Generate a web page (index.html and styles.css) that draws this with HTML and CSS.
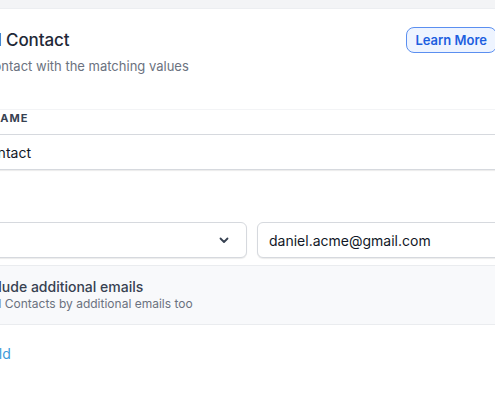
FILE: index.html
```html
<!DOCTYPE html>
<html lang="en">
<head>
<meta charset="utf-8">
<title>Find Contact</title>
<link rel="stylesheet" href="styles.css">
</head>
<body>
<div class="panel">
  <div class="header">
    <div class="heading">
      <h1 class="title">Find Contact</h1>
      <p class="subtitle">Find a Contact with the matching values</p>
    </div>
    <button class="learn-btn" type="button">Learn More</button>
  </div>

  <div class="table-head">
    <span class="col-label">NAME</span>
  </div>
  <div class="input name-input">Contact</div>

  <div class="match-row">
    <div class="select">
      <span class="select-value"></span>
      <svg class="chevron" width="12" height="12" viewBox="0 0 12 12" aria-hidden="true">
        <path d="M2.5 4.5 L6 8 L9.5 4.5" fill="none" stroke="#374151" stroke-width="1.8" stroke-linecap="round" stroke-linejoin="round"/>
      </svg>
    </div>
    <div class="input email">daniel.acme@gmail.com</div>
  </div>

  <div class="option-box">
    <div class="option-title">Include additional emails</div>
    <div class="option-desc">Find Contacts by additional emails too</div>
  </div>

  <a class="add-link" href="#">+ Add Field</a>
</div>
</body>
</html>
```

FILE: styles.css
```css
* { box-sizing: border-box; }

html, body {
  margin: 0;
  padding: 0;
}

body {
  background: #f3f4f6;
  font-family: Inter, "Noto Sans", "Liberation Sans", sans-serif;
  overflow: hidden;
  height: 400px;
  padding-top: 8px;
}

.panel {
  background: #ffffff;
  border-top: 1px solid #eceef1;
  margin-left: -57px;
  width: 590px;
  height: 392px;
  padding: 18px 24px 0 24px;
}

.header {
  display: flex;
  justify-content: space-between;
  align-items: flex-start;
}

.title {
  margin: 0;
  font-size: 17px;
  line-height: 26px;
  font-weight: 500;
  color: #1f2937;
  letter-spacing: -0.1px;
}

.subtitle {
  margin: 4px 0 0 -24px;
  font-size: 13px;
  line-height: 18px;
  color: #6b7280;
}

.learn-btn {
  height: 26px;
  padding: 0 9px 0 8px;
  margin-right: 12px;
  border: 1px solid #5b8ff0;
  background: #eef4ff;
  color: #1d5fe0;
  font-family: inherit;
  font-size: 13px;
  font-weight: 600;
  border-radius: 8px;
  white-space: nowrap;
}

.table-head {
  margin-top: 34px;
  border-top: 1px solid #f3f4f6;
  height: 25px;
  padding: 1px 0 0 24px;
}

.col-label {
  display: block;
  font-size: 11px;
  line-height: 14px;
  font-weight: 700;
  letter-spacing: 0.09em;
  color: #374151;
}

.input {
  height: 36px;
  border: 1px solid #d6d9de;
  border-radius: 6px;
  box-shadow: 0 1px 1px rgba(0, 0, 0, 0.08);
  padding: 0 11px 0 14px;
  display: flex;
  align-items: center;
  font-size: 14px;
  color: #111827;
  background: #fff;
  white-space: nowrap;
}

.name-input {
  padding-left: 11px;
}

.match-row {
  margin-top: 52px;
  display: grid;
  grid-template-columns: 280px 1fr;
  gap: 10px;
}

.select {
  height: 36px;
  border: 1px solid #d6d9de;
  border-radius: 6px;
  box-shadow: 0 1px 1px rgba(0, 0, 0, 0.08);
  display: flex;
  align-items: center;
  justify-content: space-between;
  padding: 0 16px 0 12px;
  background: #fff;
}

.chevron {
  display: block;
}

.input.email {
  padding-left: 11px;
}

.option-box {
  margin-top: 7px;
  height: 60px;
  background: #f8f9fb;
  border: 1px solid #eaecef;
  padding: 0 12px 0 10px;
  display: flex;
  flex-direction: column;
  justify-content: center;
}

.option-title {
  font-size: 14px;
  line-height: 18px;
  font-weight: 500;
  color: #374151;
  white-space: nowrap;
}

.option-desc {
  margin-left: -1px;
  font-size: 12px;
  line-height: 16px;
  color: #6b7280;
  white-space: nowrap;
}

.add-link {
  display: inline-block;
  margin-top: 19px;
  margin-left: -32px;
  font-size: 14px;
  line-height: 20px;
  color: #3b9ad9;
  text-decoration: none;
  white-space: nowrap;
}
```
